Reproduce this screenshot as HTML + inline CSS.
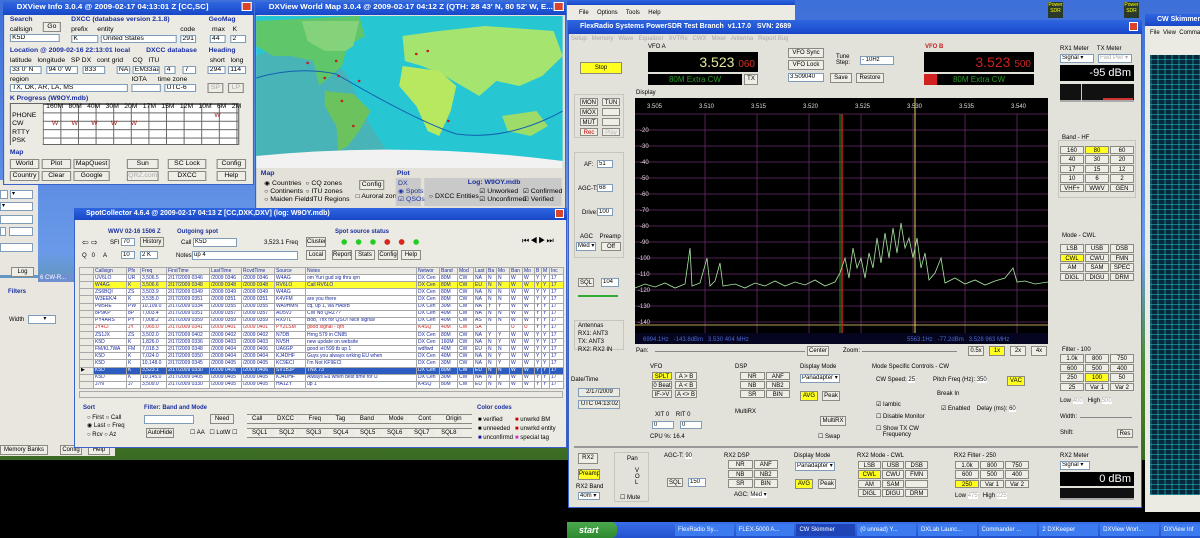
<!DOCTYPE html>
<html><head><meta charset="utf-8"><style>
*{margin:0;padding:0;box-sizing:border-box}
body{width:1200px;height:538px;overflow:hidden;position:relative;background:#000;font-family:"Liberation Sans",sans-serif;font-size:6px;color:#000}
.a{position:absolute}
.tb{position:absolute;background:linear-gradient(#2f66e0,#1747c8);color:#fff;font-weight:bold;font-size:7px;line-height:12px;padding-left:12px;white-space:nowrap;overflow:hidden}
.win{position:absolute;background:#e6e4dc}
.btn{position:absolute;background:#eeede6;border:1px solid #8a8a80;text-align:center;font-size:6px;line-height:8px;white-space:nowrap;overflow:hidden}
.y{background:#ffff20}
.inp{position:absolute;background:#fff;border:1px solid #7f9db9;font-size:6px;line-height:7px;padding-left:1px;white-space:nowrap;overflow:hidden}
.lbl{position:absolute;font-size:6px;white-space:nowrap}
.bl{color:#1a2fa0;font-weight:bold}
.grp{position:absolute;border:1px solid #c8c6bc}
.x{position:absolute;width:9px;height:9px;background:#d9442a;border:1px solid #fff;top:2px}
table{border-collapse:collapse;table-layout:fixed;height:122px}
td{border:1px solid #a8a8a8;font-size:5px;line-height:5px;white-space:nowrap;overflow:hidden;padding:0 0 0 1px;color:#1a2aa0}
</style></head><body>

<div class="a" style="left:0;top:0;width:1200px;height:460px;background:linear-gradient(#3d6fd8,#6a9ae8 55%,#4c8a2e 80%,#3a6a22)"></div>
<div class="a" style="left:0;top:460px;width:567px;height:78px;background:#000"></div>

<div class="win" style="left:0;top:180px;width:38px;height:95px;background:#e8e6de"></div>
<div class="inp" style="left:0;top:190px;width:8px;height:9px"></div><div class="inp" style="left:10px;top:190px;width:23px;height:9px">▾</div>
<div class="inp" style="left:0;top:202px;width:33px;height:9px">▾</div>
<div class="inp" style="left:0;top:215px;width:33px;height:9px"></div>
<div class="inp" style="left:0;top:227px;width:6px;height:9px"></div><div class="inp" style="left:9px;top:227px;width:24px;height:9px"></div>
<div class="inp" style="left:0;top:243px;width:33px;height:9px"></div>
<div class="btn" style="left:11px;top:267px;width:23px;height:10px">Log</div>
<div class="win" style="left:0;top:278px;width:74px;height:178px;background:#e8e6de"></div>
<div class="a" style="left:38px;top:274px;width:36px;height:8px;background:#6f8fd0;color:#fff;font-size:6px;padding-left:2px;line-height:8px">6 CW-R...</div>
<div class="lbl bl" style="left:8px;top:289px">Filters</div>
<div class="lbl" style="left:9px;top:317px">Width</div>
<div class="inp" style="left:28px;top:315px;width:28px;height:9px">&nbsp;&nbsp;&nbsp;&nbsp;&nbsp;&nbsp;&nbsp;&nbsp;▾</div>
<div class="win" style="left:0;top:444px;width:115px;height:12px;background:#e8e6de"></div>
<div class="btn" style="left:0;top:445px;width:48px;height:10px">Memory Banks</div>
<div class="btn" style="left:60px;top:445px;width:22px;height:10px">Config</div>
<div class="btn" style="left:88px;top:445px;width:22px;height:10px">Help</div>

<!-- DXView Info -->
<div class="a" style="left:0;top:0;width:260px;height:190px;transform-origin:2px 0;transform:translateX(1px) scaleX(1.136)">
<div class="win" style="left:2px;top:2px;width:221px;height:183px;background:#ecebe3;border:1px solid #3a62c8"></div>
<div class="tb" style="left:2px;top:2px;width:221px;height:13px">DXView Info 3.0.4 @ 2009-02-17 04:13:01 Z [CC,SC]</div>
<div class="x" style="left:212px"></div>
<div class="lbl bl" style="left:8px;top:17px">Search</div>
<div class="lbl bl" style="left:62px;top:17px">DXCC (database version 2.1.8)</div>
<div class="lbl bl" style="left:183px;top:17px">GeoMag</div>
<div class="lbl" style="left:8px;top:27px">callsign</div><div class="btn" style="left:37px;top:22px;width:16px;height:10px">Go</div>
<div class="inp" style="left:8px;top:34px;width:44px;height:8px">K5D</div>
<div class="lbl" style="left:62px;top:27px">prefix &nbsp;&nbsp;&nbsp; entity</div><div class="lbl" style="left:158px;top:27px">code</div>
<div class="inp" style="left:62px;top:35px;width:24px;height:8px">K</div>
<div class="inp" style="left:88px;top:35px;width:67px;height:8px">United States</div>
<div class="inp" style="left:158px;top:35px;width:14px;height:8px">291</div>
<div class="lbl" style="left:186px;top:27px">max &nbsp;&nbsp; K</div>
<div class="inp" style="left:184px;top:35px;width:14px;height:8px">44</div><div class="inp" style="left:202px;top:35px;width:14px;height:8px">2</div>
<div class="lbl bl" style="left:8px;top:48px">Location @ 2009-02-16 22:13:01 local</div>
<div class="lbl bl" style="left:128px;top:48px">DXCC database</div>
<div class="lbl bl" style="left:183px;top:48px">Heading</div>
<div class="lbl" style="left:8px;top:58px">latitude &nbsp; longitude &nbsp; SP DX &nbsp; cont grid &nbsp;&nbsp;&nbsp; CQ &nbsp; ITU</div>
<div class="inp" style="left:8px;top:66px;width:28px;height:8px">33 0' N</div>
<div class="inp" style="left:40px;top:66px;width:28px;height:8px">94 0' W</div>
<div class="inp" style="left:72px;top:66px;width:20px;height:8px">833</div>
<div class="inp" style="left:102px;top:66px;width:12px;height:8px">NA</div>
<div class="inp" style="left:116px;top:66px;width:24px;height:8px">EM33aa</div>
<div class="inp" style="left:144px;top:66px;width:10px;height:8px">4</div>
<div class="inp" style="left:160px;top:66px;width:12px;height:8px">7</div>
<div class="lbl" style="left:184px;top:58px">short &nbsp; long</div>
<div class="inp" style="left:182px;top:66px;width:16px;height:8px">294</div><div class="inp" style="left:200px;top:66px;width:16px;height:8px">114</div>
<div class="lbl" style="left:8px;top:77px">region</div><div class="lbl" style="left:115px;top:77px">IOTA &nbsp;&nbsp;&nbsp;&nbsp; time zone</div>
<div class="inp" style="left:8px;top:84px;width:104px;height:8px">TX, OK, AR, LA, MS</div>
<div class="inp" style="left:115px;top:84px;width:26px;height:8px"></div>
<div class="inp" style="left:144px;top:84px;width:28px;height:8px">UTC-6</div>
<div class="btn" style="left:182px;top:83px;width:14px;height:10px;color:#aaa">SP</div><div class="btn" style="left:200px;top:83px;width:14px;height:10px;color:#aaa">LP</div>
<div class="lbl bl" style="left:8px;top:96px">K Progress (W9OY.mdb)</div>
<div class="a" style="left:8px;top:103px;width:202px;height:42px;background:#fff;border:1px solid #666;
background-image:linear-gradient(90deg,#666 1px,transparent 1px),linear-gradient(#666 1px,transparent 1px);background-size:15.5px 8.4px;background-position:28px 0,0 0"></div>
<div class="a" style="left:9px;top:104px;width:28px;height:41px;background:#ecebe3"></div>
<div class="lbl" style="left:10px;top:112px;line-height:8.4px">PHONE<br>CW<br>RTTY<br>PSK</div>
<div class="lbl" style="left:40px;top:104px;word-spacing:3px">160M 80M 40M 30M 20M 17M 15M 12M 10M 6M 2M</div>
<div class="lbl" style="left:45px;top:121px;color:#a02020;word-spacing:10px">W W W W W</div>
<div class="lbl" style="left:188px;top:113px;color:#a02020">W</div>
<div class="lbl bl" style="left:8px;top:150px">Map</div>
<div class="btn" style="left:8px;top:159px;width:26px;height:10px">World</div>
<div class="btn" style="left:36px;top:159px;width:26px;height:10px">Plot</div>
<div class="btn" style="left:64px;top:159px;width:32px;height:10px">MapQuest</div>
<div class="btn" style="left:8px;top:171px;width:26px;height:10px">Country</div>
<div class="btn" style="left:36px;top:171px;width:26px;height:10px">Clear</div>
<div class="btn" style="left:64px;top:171px;width:32px;height:10px">Google</div>
<div class="btn" style="left:111px;top:159px;width:28px;height:10px">Sun</div>
<div class="btn" style="left:147px;top:159px;width:34px;height:10px">SC Lock</div>
<div class="btn" style="left:190px;top:159px;width:26px;height:10px">Config</div>
<div class="btn" style="left:111px;top:171px;width:28px;height:10px;color:#aaa">QRZ.com</div>
<div class="btn" style="left:147px;top:171px;width:34px;height:10px">DXCC</div>
<div class="btn" style="left:190px;top:171px;width:26px;height:10px">Help</div>
</div>

<!-- World map -->
<div class="a" style="left:0;top:0;width:500px;height:215px;transform-origin:222px 0;transform:translateX(33px) scaleX(1.144)">
<div class="win" style="left:222px;top:2px;width:272px;height:208px;background:#e3e1d8;border:1px solid #3a62c8"></div>
<div class="tb" style="left:222px;top:2px;width:272px;height:13px">DXView World Map 3.0.4 @ 2009-02-17 04:12 Z (QTH: 28 43' N, 80 52' W, E...</div>
<div class="x" style="left:483px"></div>
<svg class="a" style="left:223px;top:16px" width="268" height="152" viewBox="0 0 268 152">
<rect width="268" height="152" fill="#26c7d3"/>
<path d="M0 40 L20 30 L40 25 L60 35 L80 60 L100 110 L120 145 L0 150Z" fill="#48b4b8"/>
<path d="M0 5 L90 0 L95 20 L80 30 L75 50 L70 55 L55 70 L50 45 L30 40 L15 40 L0 30Z" fill="#5fc66a"/>
<path d="M40 5 L90 5 L85 30 L78 35 L60 35 L45 25Z" fill="#84d27a"/>
<path d="M60 75 L85 78 L100 95 L90 115 L80 130 L72 135 L70 110 L60 90Z" fill="#6cc35e"/>
<path d="M128 20 L160 15 L200 10 L260 15 L268 40 L250 60 L230 70 L210 65 L195 80 L180 70 L165 60 L145 50 L130 45Z" fill="#a5e46e"/>
<path d="M128 50 L160 55 L175 70 L170 95 L160 120 L150 115 L140 90 L125 70Z" fill="#b8e860"/>
<path d="M215 100 L245 95 L255 110 L240 120 L220 115Z" fill="#9edc6a"/>
<path d="M0 140 Q134 125 268 145 L268 152 L0 152Z" fill="#f2f2f2"/>
<path d="M0 62 Q35 50 70 58 Q140 105 175 118 Q220 125 268 95" stroke="#1460b0" stroke-width="1" fill="none"/>
<g fill="#c02020"><circle cx="45" cy="47" r="1.2"/><circle cx="70" cy="45" r="1.2"/><circle cx="72" cy="60" r="1.2"/><circle cx="60" cy="62" r="1.2"/><circle cx="90" cy="65" r="1.2"/><circle cx="75" cy="85" r="1.2"/><circle cx="85" cy="110" r="1.2"/><circle cx="150" cy="35" r="1.2"/><circle cx="140" cy="38" r="1.2"/><circle cx="168" cy="105" r="1.2"/></g>
</svg>
<div class="lbl bl" style="left:227px;top:171px">Map</div>
<div class="lbl" style="left:230px;top:180px;line-height:8px">◉ Countries<br>○ Continents<br>○ Maiden Fields</div>
<div class="lbl" style="left:266px;top:180px;line-height:8px">○ CQ zones<br>○ ITU zones<br>○ ITU Regions</div>
<div class="btn" style="left:313px;top:180px;width:22px;height:10px">Config</div>
<div class="lbl" style="left:310px;top:194px">□ Auroral zones</div>
<div class="lbl bl" style="left:346px;top:171px">Plot</div>
<div class="a" style="left:345px;top:178px;width:22px;height:28px;background:#c9c9c9"></div>
<div class="lbl" style="left:347px;top:180px;line-height:8px;color:#1a2fa0">DX<br>◉ Spots<br>☑ QSOs</div>
<div class="a" style="left:370px;top:178px;width:120px;height:28px;background:#c9c9c9"></div>
<div class="lbl bl" style="left:408px;top:180px">Log: W9OY.mdb</div>
<div class="lbl" style="left:374px;top:194px">○ DXCC Entities</div>
<div class="lbl" style="left:418px;top:188px;line-height:8px">☑ Unworked<br>☑ Unconfirmed</div>
<div class="lbl" style="left:456px;top:188px;line-height:8px">☑ Confirmed<br>☑ Verified</div>
</div>

<!-- SpotCollector -->
<div class="win" style="left:74px;top:208px;width:493px;height:240px;background:#ecebe3;border:1px solid #3a62c8"></div>
<div class="tb" style="left:74px;top:208px;width:493px;height:12px">SpotCollector 4.6.4 @ 2009-02-17 04:13 Z [CC,DXK,DXV] (log: W9OY.mdb)</div>
<div class="x" style="left:555px;top:209px"></div>
<div class="lbl bl" style="left:108px;top:229px">WWV 02-16 1506 Z</div>
<div class="lbl bl" style="left:177px;top:229px">Outgoing spot</div>
<div class="lbl bl" style="left:335px;top:229px">Spot source status</div>
<div class="lbl" style="left:82px;top:238px;font-size:8px">⇦ ⇨</div>
<div class="lbl" style="left:110px;top:240px">SFI</div><div class="inp" style="left:121px;top:238px;width:14px;height:8px">70</div>
<div class="btn" style="left:140px;top:237px;width:24px;height:10px">History</div>
<div class="lbl" style="left:82px;top:253px">Q &nbsp; 0 &nbsp;&nbsp;&nbsp; A</div><div class="inp" style="left:121px;top:251px;width:14px;height:8px">10</div><div class="inp" style="left:140px;top:251px;width:18px;height:8px">2 K</div>
<div class="lbl" style="left:181px;top:240px">Call</div><div class="inp" style="left:193px;top:238px;width:44px;height:9px">K5D</div>
<div class="lbl" style="left:264px;top:240px">3,523.1 Freq</div>
<div class="btn" style="left:306px;top:237px;width:20px;height:10px">Cluster</div>
<div class="lbl" style="left:176px;top:253px">Notes</div><div class="inp" style="left:192px;top:251px;width:106px;height:9px">up 4</div>
<div class="btn" style="left:306px;top:250px;width:20px;height:10px">Local</div>
<div class="a" style="left:337px;top:238px;width:86px;height:8px;background:radial-gradient(circle,#2c2 2.5px,transparent 3px);background-size:14.4px 8px"></div>
<div class="a" style="left:380px;top:238px;width:29px;height:8px;background:radial-gradient(circle,#d22 2.5px,transparent 3px);background-size:14.4px 8px"></div>
<div class="btn" style="left:332px;top:250px;width:20px;height:10px">Report</div>
<div class="btn" style="left:355px;top:250px;width:20px;height:10px">Stats</div>
<div class="btn" style="left:378px;top:250px;width:20px;height:10px">Config</div>
<div class="btn" style="left:401px;top:250px;width:20px;height:10px">Help</div>
<div class="lbl" style="left:522px;top:236px;font-size:8px;letter-spacing:1px">⏮◀▶⏭</div>
<table class="a" style="left:79px;top:267px;width:484px;background:#fff">
<colgroup><col style="width:14px"><col style="width:33px"><col style="width:14px"><col style="width:26px"><col style="width:43px"><col style="width:32px"><col style="width:33px"><col style="width:31px"><col style="width:111px"><col style="width:23px"><col style="width:18px"><col style="width:16px"><col style="width:13px"><col style="width:10px"><col style="width:13px"><col style="width:13px"><col style="width:12px"><col style="width:7px"><col style="width:8px"><col style="width:14px"></colgroup>
<tr style="background:#ecebe3"><td></td><td>Callsign</td><td>Pfx</td><td>Freq</td><td>FirstTime</td><td>LastTime</td><td>RcvdTime</td><td>Source</td><td>Notes</td><td>Networ</td><td>Band</td><td>Mod</td><td>Last</td><td>Ba</td><td>Mo</td><td>Ban</td><td>Mo</td><td>B</td><td>M</td><td>Inc</td></tr>
<tr><td style="background:#ecebe3"></td><td>UV6LO</td><td>UR</td><td>3,506.5</td><td>2/17/2009 0346</td><td>/2009 0346</td><td>/2009 0346</td><td>W4AG</td><td>om Yuri gud sig thru qrn</td><td>DX Cen</td><td>80M</td><td>CW</td><td>NA</td><td>N</td><td>N</td><td>W</td><td>W</td><td>Y</td><td>Y</td><td>17</td></tr>
<tr style="background:#ffff30"><td style="background:#ecebe3"></td><td>W4AG</td><td>K</td><td>3,506.6</td><td>2/17/2009 0348</td><td>/2009 0348</td><td>/2009 0348</td><td>RV6LO</td><td>Call RV6LO</td><td>DX Cen</td><td>80M</td><td>CW</td><td>EU</td><td>N</td><td>N</td><td>W</td><td>W</td><td>Y</td><td>Y</td><td>17</td></tr>
<tr><td style="background:#ecebe3"></td><td>ZS6BQI</td><td>ZS</td><td>3,503.9</td><td>2/17/2009 0349</td><td>/2009 0349</td><td>/2009 0349</td><td>W4AG</td><td></td><td>DX Cen</td><td>80M</td><td>CW</td><td>NA</td><td>N</td><td>N</td><td>W</td><td>W</td><td>Y</td><td>Y</td><td>17</td></tr>
<tr><td style="background:#ecebe3"></td><td>W3EEK/4</td><td>K</td><td>3,535.0</td><td>2/17/2009 0351</td><td>/2009 0351</td><td>/2009 0351</td><td>K4VFM</td><td>are you there</td><td>DX Cen</td><td>80M</td><td>CW</td><td>NA</td><td>N</td><td>N</td><td>W</td><td>W</td><td>Y</td><td>Y</td><td>17</td></tr>
<tr><td style="background:#ecebe3"></td><td>Pw5RE</td><td>PW</td><td>10,109.0</td><td>2/17/2009 0334</td><td>/2009 0355</td><td>/2009 0355</td><td>WA9HMN</td><td>cq, up 1, via HA8IB</td><td>DX Cen</td><td>30M</td><td>CW</td><td>NA</td><td>Y</td><td>Y</td><td>W</td><td>W</td><td>Y</td><td>Y</td><td>17</td></tr>
<tr><td style="background:#ecebe3"></td><td>8P9KP</td><td>8P</td><td>7,003.4</td><td>2/17/2009 0351</td><td>/2009 0357</td><td>/2009 0357</td><td>AD5VJ</td><td>CW No QRZ??</td><td>DX Cen</td><td>40M</td><td>CW</td><td>NA</td><td>N</td><td>N</td><td>W</td><td>W</td><td>Y</td><td>Y</td><td>17</td></tr>
<tr><td style="background:#ecebe3"></td><td>PY4ARS</td><td>PY</td><td>7,008.2</td><td>2/17/2009 0359</td><td>/2009 0359</td><td>/2009 0359</td><td>RX9TL</td><td>Bob, Tnx for QSO! Nice signal!</td><td>DX Cen</td><td>40M</td><td>CW</td><td>AS</td><td>N</td><td>N</td><td>W</td><td>W</td><td>Y</td><td>Y</td><td>17</td></tr>
<tr><td style="background:#ecebe3"></td><td style="color:#d02020">JY4CI</td><td style="color:#d02020">JY</td><td style="color:#d02020">7,065.0</td><td style="color:#d02020">2/17/2009 0341</td><td style="color:#d02020">/2009 0401</td><td style="color:#d02020">/2009 0401</td><td style="color:#d02020">PY2LSM</td><td style="color:#d02020">good signal - qrn</td><td style="color:#d02020">K4SQ</td><td style="color:#d02020">40M</td><td style="color:#d02020">CW</td><td style="color:#d02020">SA</td><td></td><td></td><td style="color:#d02020">U</td><td style="color:#d02020">U</td><td>Y</td><td>Y</td><td>17</td></tr>
<tr><td style="background:#ecebe3"></td><td>ZS1JX</td><td>ZS</td><td>3,502.0</td><td>2/17/2009 0402</td><td>/2009 0402</td><td>/2009 0402</td><td>N7DB</td><td>Hrng 579 in CN85</td><td>DX Cen</td><td>80M</td><td>CW</td><td>NA</td><td>Y</td><td>Y</td><td>W</td><td>W</td><td>Y</td><td>Y</td><td>17</td></tr>
<tr><td style="background:#ecebe3"></td><td>K5D</td><td>K</td><td>1,826.0</td><td>2/17/2009 0336</td><td>/2009 0403</td><td>/2009 0403</td><td>NV5H</td><td>new update on website</td><td>DX Cen</td><td>160M</td><td>CW</td><td>NA</td><td>N</td><td>Y</td><td>W</td><td>W</td><td>Y</td><td>Y</td><td>17</td></tr>
<tr><td style="background:#ecebe3"></td><td>FM/KL7WA</td><td>FM</td><td>7,018.3</td><td>2/17/2009 0348</td><td>/2009 0404</td><td>/2009 0406</td><td>UA6GP</td><td>good sri 599 tb up 1</td><td>wdfiwd</td><td>40M</td><td>CW</td><td>EU</td><td>N</td><td>N</td><td>W</td><td>W</td><td>Y</td><td>Y</td><td>17</td></tr>
<tr><td style="background:#ecebe3"></td><td>K5D</td><td>K</td><td>7,024.0</td><td>2/17/2009 0350</td><td>/2009 0404</td><td>/2009 0404</td><td>KJ4DHF</td><td>Guys you always wrking EU when</td><td>DX Cen</td><td>40M</td><td>CW</td><td>NA</td><td>N</td><td>Y</td><td>W</td><td>W</td><td>Y</td><td>Y</td><td>17</td></tr>
<tr><td style="background:#ecebe3"></td><td>K5D</td><td>K</td><td>10,148.0</td><td>2/17/2009 0345</td><td>/2009 0405</td><td>/2009 0405</td><td>KC9ECI</td><td>I'm Not KF9ECI</td><td>DX Cen</td><td>30M</td><td>CW</td><td>NA</td><td>N</td><td>Y</td><td>W</td><td>W</td><td>Y</td><td>Y</td><td>17</td></tr>
<tr style="background:#2c5cc0"><td style="background:#ecebe3;color:#000">▶</td><td style="color:#fff">K5D</td><td style="color:#fff">K</td><td style="color:#fff">3,523.1</td><td style="color:#fff">2/17/2009 0330</td><td style="color:#fff">/2009 0406</td><td style="color:#fff">/2009 0406</td><td style="color:#fff">SV1BJP</td><td style="color:#fff">TNX 73</td><td style="color:#fff">DX Cen</td><td style="color:#fff">80M</td><td style="color:#fff">CW</td><td style="color:#fff">EU</td><td style="color:#fff">N</td><td style="color:#fff">N</td><td style="color:#fff">W</td><td style="color:#fff">W</td><td style="color:#fff">Y</td><td style="color:#fff">Y</td><td style="color:#fff">17</td></tr>
<tr><td style="background:#ecebe3"></td><td>K5D</td><td>K</td><td>10,145.0</td><td>2/17/2009 0405</td><td>/2009 0405</td><td>/2009 0405</td><td>KJ4DHF</td><td>Always Eu when best time for U</td><td>DX Cen</td><td>30M</td><td>CW</td><td>NA</td><td>N</td><td>Y</td><td>W</td><td>W</td><td>Y</td><td>Y</td><td>17</td></tr>
<tr><td style="background:#ecebe3"></td><td>J7N</td><td>J7</td><td>3,509.0</td><td>2/17/2009 0330</td><td>/2009 0405</td><td>/2009 0405</td><td>HA1ZY</td><td>up 1</td><td>K4SQ</td><td>80M</td><td>CW</td><td>EU</td><td>N</td><td>N</td><td>W</td><td>W</td><td>Y</td><td>Y</td><td>17</td></tr>
</table>
<div class="a" style="left:79px;top:391px;width:484px;height:7px;background:#ecebe3;border:1px solid #aaa"></div>
<div class="win" style="left:75px;top:399px;width:491px;height:48px;background:#ecebe3"></div>
<div class="lbl bl" style="left:83px;top:405px">Sort</div>
<div class="lbl" style="left:87px;top:414px;line-height:8.4px">○ First ○ Call<br>◉ Last ○ Freq<br>○ Rcv ○ Az</div>
<div class="lbl bl" style="left:144px;top:405px">Filter: Band and Mode</div>
<div class="inp" style="left:144px;top:415px;width:50px;height:9px">&nbsp;</div>
<div class="btn" style="left:210px;top:414px;width:24px;height:10px">Need</div>
<div class="btn" style="left:146px;top:428px;width:28px;height:10px">AutoHide</div>
<div class="lbl" style="left:190px;top:429px">☐ AA &nbsp; ☐ LotW ☐</div>
<div class="a" style="left:247px;top:414px;width:225px;height:10px;background:repeating-linear-gradient(90deg,#eeede6 0 22px,transparent 22px 26.8px);border-top:1px solid #8a8a80;border-bottom:1px solid #8a8a80"></div>
<div class="lbl" style="left:252px;top:416px;word-spacing:13px">Call DXCC Freq Tag Band Mode Cont Origin</div>
<div class="a" style="left:247px;top:428px;width:225px;height:10px;background:repeating-linear-gradient(90deg,#eeede6 0 22px,transparent 22px 26.8px);border-top:1px solid #8a8a80;border-bottom:1px solid #8a8a80"></div>
<div class="lbl" style="left:252px;top:430px;word-spacing:10px">SQL1 SQL2 SQL3 SQL4 SQL5 SQL6 SQL7 SQL8</div>
<div class="lbl bl" style="left:477px;top:405px">Color codes</div>
<div class="lbl" style="left:478px;top:416px;line-height:9px">■ verified<br>■ unneeded<br><span style="color:#11a">■</span> unconfirmd</div>
<div class="lbl" style="left:515px;top:416px;line-height:9px"><span style="color:#c00">■</span> unwrkd BM<br><span style="color:#c00">■</span> unwrkd entity<br><span style="color:#c3c">■</span> special tag</div>

<!-- PowerSDR back window top -->
<div class="win" style="left:567px;top:0;width:228px;height:20px;background:#ecebe3"></div>
<div class="tb" style="left:567px;top:0;width:228px;height:5px;padding:0"></div>
<div class="lbl" style="left:579px;top:10px">File &nbsp;&nbsp;&nbsp; Options &nbsp;&nbsp;&nbsp; Tools &nbsp;&nbsp;&nbsp; Help</div>
<div class="a" style="left:1048px;top:2px;width:15px;height:16px;background:#2a3a2a;color:#ff0;font-size:5px;text-align:center">Power SDR</div>
<div class="a" style="left:1124px;top:2px;width:15px;height:16px;background:#2a3a2a;color:#ff0;font-size:5px;text-align:center">Power SDR</div>

<!-- PowerSDR main -->
<div class="win" style="left:568px;top:20px;width:574px;height:488px;background:#e2e1da;border:1px solid #3a62c8"></div>
<div class="tb" style="left:568px;top:20px;width:574px;height:14px;line-height:14px">FlexRadio Systems PowerSDR Test Branch &nbsp;v1.17.0 &nbsp; SVN: 2689</div>
<div class="x" style="left:1129px;top:22px"></div>
<div class="lbl" style="left:571px;top:36px;color:#aaa">Setup &nbsp; Memory &nbsp; Wave &nbsp; Equalizer &nbsp; XVTRs &nbsp; CWX &nbsp; Mixer &nbsp; Antenna &nbsp; Report Bug</div>
<div class="btn y" style="left:580px;top:62px;width:42px;height:12px;line-height:10px">Stop</div>
<div class="lbl" style="left:648px;top:44px">VFO A</div>
<div class="a" style="left:648px;top:52px;width:110px;height:20px;background:#000;color:#e8e89a;font-size:14px;text-align:right;padding-right:3px;line-height:20px">3.523 <span style="color:#e03020;font-size:10px">060</span></div>
<div class="a" style="left:648px;top:74px;width:94px;height:11px;background:#000;color:#2a9a2a;font-size:8px;text-align:center;line-height:11px">80M Extra CW</div>
<div class="btn" style="left:744px;top:74px;width:14px;height:11px">TX</div>
<div class="btn" style="left:788px;top:48px;width:36px;height:10px">VFO Sync</div>
<div class="btn" style="left:788px;top:60px;width:36px;height:10px">VFO Lock</div>
<div class="inp" style="left:788px;top:73px;width:36px;height:9px">3.509040</div>
<div class="lbl" style="left:836px;top:54px;line-height:6px">Tune<br>Step:</div>
<div class="inp" style="left:860px;top:56px;width:34px;height:9px">- 10Hz</div>
<div class="btn" style="left:830px;top:73px;width:22px;height:10px">Save</div>
<div class="btn" style="left:856px;top:73px;width:28px;height:10px">Restore</div>
<div class="lbl" style="left:925px;top:44px;color:#c02020;font-weight:bold">VFO B</div>
<div class="a" style="left:924px;top:52px;width:110px;height:20px;background:#000;color:#d02020;font-size:14px;text-align:right;padding-right:3px;line-height:20px">3.523 <span style="font-size:10px">500</span></div>
<div class="a" style="left:924px;top:74px;width:110px;height:11px;background:#000;color:#2a9a2a;font-size:8px;text-align:center;line-height:11px">80M Extra CW</div>
<div class="a" style="left:924px;top:74px;width:13px;height:11px;background:#d02020"></div>
<div class="lbl" style="left:1060px;top:46px">RX1 Meter &nbsp;&nbsp;&nbsp; TX Meter</div>
<div class="inp" style="left:1060px;top:54px;width:34px;height:9px">Signal ▾</div>
<div class="inp" style="left:1098px;top:54px;width:34px;height:9px;color:#aaa">Fwd Pwr ▾</div>
<div class="a" style="left:1060px;top:65px;width:74px;height:16px;background:#000;color:#fff;font-size:11px;text-align:right;padding-right:3px;line-height:16px">-95 dBm</div>
<div class="a" style="left:1060px;top:84px;width:74px;height:18px;background:#111;border-bottom:2px solid #aaa"></div>
<div class="a" style="left:1103px;top:88px;width:30px;height:12px;border-bottom:2px solid #c33"></div>
<div class="a" style="left:1081px;top:84px;width:1px;height:18px;background:#dd3"></div>

<div class="grp" style="left:574px;top:94px;width:50px;height:44px"></div>
<div class="btn" style="left:580px;top:98px;width:18px;height:8px">MON</div><div class="btn" style="left:602px;top:98px;width:18px;height:8px">TUN</div>
<div class="btn" style="left:580px;top:108px;width:18px;height:8px">MOX</div><div class="btn" style="left:602px;top:108px;width:18px;height:8px"></div>
<div class="btn" style="left:580px;top:118px;width:18px;height:8px">MUT</div><div class="btn" style="left:602px;top:118px;width:18px;height:8px"></div>
<div class="btn" style="left:580px;top:128px;width:18px;height:8px;color:#c00">Rec</div><div class="btn" style="left:602px;top:128px;width:18px;height:8px;color:#bbb">Play</div>
<div class="grp" style="left:574px;top:152px;width:50px;height:106px"></div>
<div class="lbl" style="left:584px;top:162px">AF:</div><div class="inp" style="left:597px;top:160px;width:16px;height:8px">51</div>
<div class="lbl" style="left:578px;top:186px">AGC-T:</div><div class="inp" style="left:597px;top:184px;width:16px;height:8px">68</div>
<div class="lbl" style="left:582px;top:210px">Drive:</div><div class="inp" style="left:597px;top:208px;width:16px;height:8px">100</div>
<div class="lbl" style="left:580px;top:234px">AGC &nbsp;&nbsp; Preamp</div>
<div class="inp" style="left:576px;top:242px;width:20px;height:9px">Med ▾</div><div class="btn" style="left:601px;top:242px;width:20px;height:9px">Off</div>
<div class="btn" style="left:578px;top:278px;width:16px;height:9px">SQL</div><div class="inp" style="left:601px;top:278px;width:18px;height:9px">104</div>
<div class="a" style="left:578px;top:295px;width:40px;height:2px;background:#3a3"></div>
<div class="grp" style="left:574px;top:320px;width:50px;height:30px"></div>
<div class="lbl" style="left:578px;top:322px;line-height:8px">Antennas<br>RX1: ANT3<br>TX: ANT3<br>RX2: RX2 IN</div>

<div class="lbl" style="left:636px;top:90px">Display</div>
<svg class="a" style="left:635px;top:98px" width="413" height="246" viewBox="0 0 413 246">
<rect width="413" height="246" fill="#000"/>
<g stroke="#6a2a6a" stroke-width="0.8">
<line x1="0" y1="16" x2="413" y2="16"/><line x1="0" y1="32" x2="413" y2="32"/><line x1="0" y1="48" x2="413" y2="48"/><line x1="0" y1="64" x2="413" y2="64"/><line x1="0" y1="80" x2="413" y2="80"/><line x1="0" y1="96" x2="413" y2="96"/><line x1="0" y1="112" x2="413" y2="112"/><line x1="0" y1="128" x2="413" y2="128"/><line x1="0" y1="144" x2="413" y2="144"/><line x1="0" y1="160" x2="413" y2="160"/><line x1="0" y1="176" x2="413" y2="176"/><line x1="0" y1="192" x2="413" y2="192"/><line x1="0" y1="208" x2="413" y2="208"/><line x1="0" y1="224" x2="413" y2="224"/>
<line x1="70" y1="16" x2="70" y2="235"/><line x1="122" y1="16" x2="122" y2="235"/><line x1="174" y1="16" x2="174" y2="235"/><line x1="226" y1="16" x2="226" y2="235"/><line x1="278" y1="16" x2="278" y2="235"/><line x1="330" y1="16" x2="330" y2="235"/><line x1="382" y1="16" x2="382" y2="235"/>
</g>
<g fill="#ddd" font-size="6" font-family="Liberation Sans"><text x="12" y="10">3.505</text><text x="64" y="10">3.510</text><text x="116" y="10">3.515</text><text x="168" y="10">3.520</text><text x="220" y="10">3.525</text><text x="272" y="10">3.530</text><text x="324" y="10">3.535</text><text x="376" y="10">3.540</text>
<text x="5" y="34">-20</text><text x="5" y="50">-30</text><text x="5" y="66">-40</text><text x="5" y="82">-50</text><text x="5" y="98">-60</text><text x="5" y="114">-70</text><text x="5" y="130">-80</text><text x="5" y="146">-90</text><text x="3" y="162">-100</text><text x="3" y="178">-110</text><text x="3" y="194">-120</text><text x="3" y="210">-130</text><text x="3" y="226">-140</text></g>
<line x1="0" y1="227" x2="413" y2="227" stroke="#bba050" stroke-width="1"/>
<line x1="205" y1="16" x2="205" y2="235" stroke="#2a8a2a"/><line x1="207" y1="16" x2="207" y2="235" stroke="#d02020" stroke-width="1.5"/>
<line x1="280" y1="0" x2="280" y2="235" stroke="#d8d860"/>
<polyline fill="none" stroke="#a8e8a0" stroke-width="0.8" points="0,190 10,186 20,189 30,185 40,190 50,186 55,150 57,188 65,185 72,160 75,188 80,183 85,165 88,188 100,186 110,190 120,185 130,188 140,183 150,188 160,184 170,187 180,182 190,188 200,184 205,175 210,160 214,180 218,150 222,170 226,160 230,180 234,155 238,170 242,140 246,165 250,135 254,160 258,130 262,155 266,125 270,150 274,140 278,160 282,140 286,170 290,155 294,182 300,175 306,160 310,185 320,180 330,186 340,182 350,187 360,183 370,180 378,170 382,184 390,183 400,186 413,184"/>
<rect y="235" width="413" height="11" fill="#050520"/>
<g fill="#4a6ad0" font-size="6" font-family="Liberation Sans"><text x="8" y="243">6994.1Hz &nbsp; -143.8dBm &nbsp; 3.530 404 MHz</text><text x="272" y="243">5563.1Hz &nbsp; -77.2dBm &nbsp; 3.528 963 MHz</text></g>
</svg>
<div class="lbl" style="left:636px;top:348px">Pan:</div>
<div class="a" style="left:655px;top:351px;width:150px;height:1px;background:#888"></div>
<div class="btn" style="left:807px;top:346px;width:22px;height:10px">Center</div>
<div class="lbl" style="left:843px;top:348px">Zoom:</div>
<div class="a" style="left:862px;top:351px;width:95px;height:1px;background:#888"></div>
<div class="btn" style="left:968px;top:346px;width:16px;height:10px">0.5x</div>
<div class="btn y" style="left:989px;top:346px;width:16px;height:10px">1x</div>
<div class="btn" style="left:1010px;top:346px;width:16px;height:10px">2x</div>
<div class="btn" style="left:1031px;top:346px;width:16px;height:10px">4x</div>

<div class="lbl" style="left:1062px;top:135px">Band - HF</div>
<div class="grp" style="left:1058px;top:140px;width:78px;height:58px"></div>
<div class="a" style="left:1060px;top:146px;width:74px;height:46px;display:grid;grid-template-columns:repeat(3,1fr);gap:1px;font-size:6px;text-align:center;line-height:8.3px">
<div class="btn" style="position:static">160</div><div class="btn y" style="position:static">80</div><div class="btn" style="position:static">60</div><div class="btn" style="position:static">40</div><div class="btn" style="position:static">30</div><div class="btn" style="position:static">20</div><div class="btn" style="position:static">17</div><div class="btn" style="position:static">15</div><div class="btn" style="position:static">12</div><div class="btn" style="position:static">10</div><div class="btn" style="position:static">6</div><div class="btn" style="position:static">2</div><div class="btn" style="position:static">VHF+</div><div class="btn" style="position:static">WWV</div><div class="btn" style="position:static">GEN</div></div>
<div class="lbl" style="left:1062px;top:233px">Mode - CWL</div>
<div class="a" style="left:1060px;top:244px;width:74px;height:37px;display:grid;grid-template-columns:repeat(3,1fr);gap:1px;text-align:center;line-height:8px">
<div class="btn" style="position:static">LSB</div><div class="btn" style="position:static">USB</div><div class="btn" style="position:static">DSB</div><div class="btn y" style="position:static">CWL</div><div class="btn" style="position:static">CWU</div><div class="btn" style="position:static">FMN</div><div class="btn" style="position:static">AM</div><div class="btn" style="position:static">SAM</div><div class="btn" style="position:static">SPEC</div><div class="btn" style="position:static">DIGL</div><div class="btn" style="position:static">DIGU</div><div class="btn" style="position:static">DRM</div></div>
<div class="lbl" style="left:1062px;top:347px">Filter - 100</div>
<div class="a" style="left:1060px;top:354px;width:74px;height:37px;display:grid;grid-template-columns:repeat(3,1fr);gap:1px;text-align:center;line-height:8px">
<div class="btn" style="position:static">1.0k</div><div class="btn" style="position:static">800</div><div class="btn" style="position:static">750</div><div class="btn" style="position:static">600</div><div class="btn" style="position:static">500</div><div class="btn" style="position:static">400</div><div class="btn" style="position:static">250</div><div class="btn y" style="position:static">100</div><div class="btn" style="position:static">50</div><div class="btn" style="position:static">25</div><div class="btn" style="position:static">Var 1</div><div class="btn" style="position:static">Var 2</div></div>
<div class="lbl" style="left:1060px;top:398px">Low <span style="background:#fff;color:#aaa">400</span> &nbsp; High <span style="background:#fff;color:#aaa">500</span></div>
<div class="lbl" style="left:1060px;top:414px">Width:</div><div class="a" style="left:1080px;top:417px;width:52px;height:1px;background:#888"></div>
<div class="lbl" style="left:1060px;top:430px">Shift:</div><div class="btn" style="left:1117px;top:429px;width:16px;height:9px">Res</div>

<div class="lbl" style="left:571px;top:377px">Date/Time</div>
<div class="inp" style="left:578px;top:388px;width:42px;height:9px;text-align:center;background:#ecebe3">2/17/2009</div>
<div class="inp" style="left:578px;top:400px;width:42px;height:9px;text-align:center;background:#ecebe3">UTC 04:13:02</div>
<div class="lbl" style="left:650px;top:364px">VFO</div>
<div class="btn y" style="left:652px;top:372px;width:20px;height:8px">SPLT</div><div class="btn" style="left:675px;top:372px;width:22px;height:8px">A &gt; B</div>
<div class="btn" style="left:652px;top:381px;width:20px;height:8px">0 Beat</div><div class="btn" style="left:675px;top:381px;width:22px;height:8px">A &lt; B</div>
<div class="btn" style="left:652px;top:390px;width:20px;height:8px">IF-&gt;V</div><div class="btn" style="left:675px;top:390px;width:22px;height:8px">A &lt;&gt; B</div>
<div class="lbl" style="left:655px;top:412px">XIT 0 &nbsp;&nbsp; RIT 0</div>
<div class="inp" style="left:652px;top:421px;width:22px;height:8px">0</div><div class="inp" style="left:680px;top:421px;width:22px;height:8px">0</div>
<div class="lbl" style="left:650px;top:434px">CPU %: 16.4</div>
<div class="lbl" style="left:735px;top:364px">DSP</div>
<div class="a" style="left:740px;top:372px;width:50px;height:26px;display:grid;grid-template-columns:1fr 1fr;gap:1px;text-align:center;line-height:7.5px"><div class="btn" style="position:static">NR</div><div class="btn" style="position:static">ANF</div><div class="btn" style="position:static">NB</div><div class="btn" style="position:static">NB2</div><div class="btn" style="position:static">SR</div><div class="btn" style="position:static">BIN</div></div>
<div class="lbl" style="left:735px;top:409px">MultiRX</div>
<div class="btn" style="left:820px;top:416px;width:26px;height:10px">MultiRX</div>
<div class="lbl" style="left:818px;top:433px">☐ Swap</div>
<div class="lbl" style="left:800px;top:364px">Display Mode</div>
<div class="inp" style="left:800px;top:374px;width:40px;height:9px">Panadapter ▾</div>
<div class="btn y" style="left:800px;top:391px;width:18px;height:10px">AVG</div><div class="btn" style="left:822px;top:391px;width:18px;height:10px">Peak</div>
<div class="lbl" style="left:872px;top:364px">Mode Specific Controls - CW</div>
<div class="lbl" style="left:876px;top:377px">CW Speed: <span style="background:#fff">25</span></div>
<div class="lbl" style="left:933px;top:377px">Pitch Freq (Hz): <span style="background:#fff">350</span></div>
<div class="btn y" style="left:1007px;top:376px;width:18px;height:10px">VAC</div>
<div class="lbl" style="left:876px;top:401px">☑ Iambic</div>
<div class="lbl" style="left:876px;top:413px">☐ Disable Monitor</div>
<div class="lbl" style="left:876px;top:426px;line-height:6px">☐ Show TX CW<br>&nbsp;&nbsp;&nbsp; Frequency</div>
<div class="lbl" style="left:937px;top:391px">Break In</div>
<div class="lbl" style="left:941px;top:405px">☑ Enabled &nbsp;&nbsp; Delay (ms): <span style="background:#fff">60</span></div>
<div class="a" style="left:574px;top:446px;width:564px;height:2px;background:#999"></div>

<div class="btn" style="left:578px;top:453px;width:20px;height:11px">RX2</div>
<div class="btn y" style="left:578px;top:469px;width:22px;height:11px">Preamp</div>
<div class="lbl" style="left:576px;top:484px">RX2 Band</div>
<div class="inp" style="left:578px;top:492px;width:22px;height:8px">40m ▾</div>
<div class="grp" style="left:614px;top:452px;width:35px;height:50px"></div>
<div class="lbl" style="left:627px;top:456px">Pan</div>
<div class="lbl" style="left:635px;top:468px;line-height:6px">V<br>O<br>L</div>
<div class="lbl" style="left:620px;top:494px">☐ Mute</div>
<div class="lbl" style="left:664px;top:453px">AGC-T: <span style="background:#fff">90</span></div>
<div class="btn" style="left:667px;top:478px;width:16px;height:9px">SQL</div><div class="inp" style="left:688px;top:478px;width:18px;height:9px">150</div>
<div class="lbl" style="left:724px;top:453px">RX2 DSP</div>
<div class="a" style="left:728px;top:460px;width:50px;height:28px;display:grid;grid-template-columns:1fr 1fr;gap:1px;text-align:center;line-height:8px"><div class="btn" style="position:static">NR</div><div class="btn" style="position:static">ANF</div><div class="btn" style="position:static">NB</div><div class="btn" style="position:static">NB2</div><div class="btn" style="position:static">SR</div><div class="btn" style="position:static">BIN</div></div>
<div class="lbl" style="left:734px;top:491px">AGC: <span style="background:#fff">Med ▾</span></div>
<div class="lbl" style="left:794px;top:453px">Display Mode</div>
<div class="inp" style="left:795px;top:462px;width:40px;height:9px">Panadapter ▾</div>
<div class="btn y" style="left:795px;top:479px;width:18px;height:10px">AVG</div><div class="btn" style="left:818px;top:479px;width:18px;height:10px">Peak</div>
<div class="lbl" style="left:857px;top:453px">RX2 Mode - CWL</div>
<div class="a" style="left:858px;top:461px;width:70px;height:36px;display:grid;grid-template-columns:repeat(3,1fr);gap:1px;text-align:center;line-height:8px"><div class="btn" style="position:static">LSB</div><div class="btn" style="position:static">USB</div><div class="btn" style="position:static">DSB</div><div class="btn y" style="position:static">CWL</div><div class="btn" style="position:static">CWU</div><div class="btn" style="position:static">FMN</div><div class="btn" style="position:static">AM</div><div class="btn" style="position:static">SAM</div><div class="btn" style="position:static"></div><div class="btn" style="position:static">DIGL</div><div class="btn" style="position:static">DIGU</div><div class="btn" style="position:static">DRM</div></div>
<div class="lbl" style="left:954px;top:453px">RX2 Filter - 250</div>
<div class="a" style="left:955px;top:461px;width:74px;height:27px;display:grid;grid-template-columns:repeat(3,1fr);gap:1px;text-align:center;line-height:8px"><div class="btn" style="position:static">1.0k</div><div class="btn" style="position:static">800</div><div class="btn" style="position:static">750</div><div class="btn" style="position:static">600</div><div class="btn" style="position:static">500</div><div class="btn" style="position:static">400</div><div class="btn y" style="position:static">250</div><div class="btn" style="position:static">Var 1</div><div class="btn" style="position:static">Var 2</div></div>
<div class="lbl" style="left:955px;top:493px">Low <span style="background:#fff;color:#aaa">475</span> &nbsp; High <span style="background:#fff;color:#aaa">225</span></div>
<div class="lbl" style="left:1060px;top:453px">RX2 Meter</div>
<div class="inp" style="left:1060px;top:461px;width:30px;height:9px">Signal ▾</div>
<div class="a" style="left:1060px;top:472px;width:74px;height:14px;background:#000;color:#fff;font-size:11px;text-align:right;padding-right:3px;line-height:14px">0 dBm</div>
<div class="a" style="left:1060px;top:488px;width:74px;height:12px;background:#111;border-bottom:2px solid #aaa"></div>

<div class="win" style="left:1145px;top:14px;width:55px;height:498px;background:#ecebe3"></div>
<div class="tb" style="left:1145px;top:14px;width:55px;height:12px">CW Skimmer</div>
<div class="lbl" style="left:1150px;top:30px">File &nbsp;View &nbsp;Comma</div>
<div class="a" style="left:1150px;top:55px;width:50px;height:440px;background:#06283a;background-image:repeating-linear-gradient(0deg,rgba(40,200,210,.5) 0 1px,transparent 1px 5px),repeating-linear-gradient(90deg,rgba(40,200,210,.3) 0 2px,transparent 2px 7px)"></div>

<div class="a" style="left:567px;top:522px;width:633px;height:16px;background:linear-gradient(#3a6ee8,#2452d0)"></div>
<div class="a" style="left:567px;top:522px;width:50px;height:16px;background:linear-gradient(#4ca84c,#2e8a2e);color:#fff;font-weight:bold;font-style:italic;font-size:9px;line-height:16px;padding-left:12px;border-radius:0 6px 6px 0">start</div>
<div class="a" style="left:675px;top:524px;width:525px;height:12px;display:flex;gap:2px;font-size:6px;color:#fff;line-height:12px">
<div style="width:60px;background:#3c7af0;padding-left:3px">FlexRadio Sy...</div><div style="width:60px;background:#3c7af0;padding-left:3px">FLEX-5000 A...</div><div style="width:60px;background:#1e44b8;padding-left:3px">CW Skimmer</div><div style="width:60px;background:#3c7af0;padding-left:3px">(0 unread) Y...</div><div style="width:60px;background:#3c7af0;padding-left:3px">DXLab Launc...</div><div style="width:60px;background:#3c7af0;padding-left:3px">Commander ...</div><div style="width:60px;background:#3c7af0;padding-left:3px">2 DXKeeper</div><div style="width:60px;background:#3c7af0;padding-left:3px">DXView Worl...</div><div style="width:40px;background:#3c7af0;padding-left:3px">DXView Inf</div></div>
</body></html>
